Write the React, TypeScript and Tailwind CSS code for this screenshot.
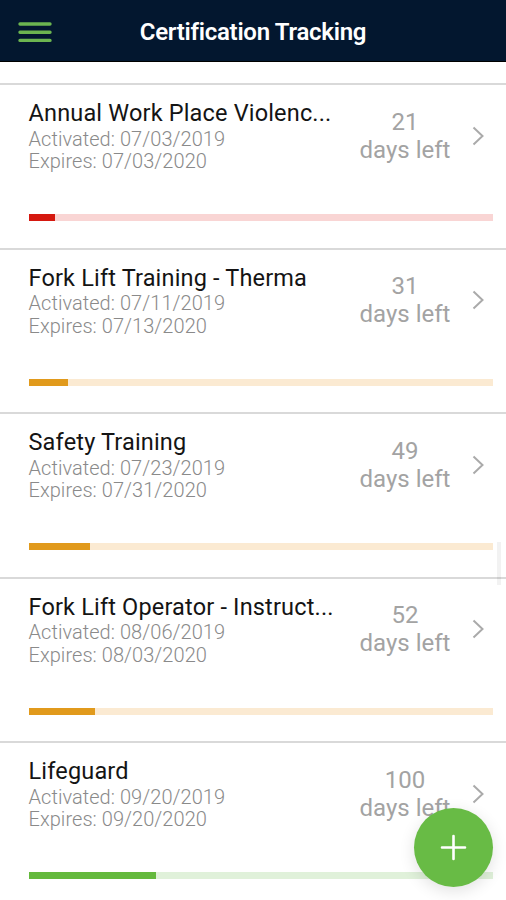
import React from 'react';
import clsx from 'clsx';

type Tone = 'red' | 'amber' | 'green';

interface Certification {
  title: string;
  activated: string;
  expires: string;
  daysLeft: number;
  progress: number;
  tone: Tone;
}

const certifications: Certification[] = [
  { title: 'Annual Work Place Violenc...', activated: '07/03/2019', expires: '07/03/2020', daysLeft: 21, progress: 5.75, tone: 'red' },
  { title: 'Fork Lift Training - Therma', activated: '07/11/2019', expires: '07/13/2020', daysLeft: 31, progress: 8.45, tone: 'amber' },
  { title: 'Safety Training', activated: '07/23/2019', expires: '07/31/2020', daysLeft: 49, progress: 13.2, tone: 'amber' },
  { title: 'Fork Lift Operator - Instruct...', activated: '08/06/2019', expires: '08/03/2020', daysLeft: 52, progress: 14.4, tone: 'amber' },
  { title: 'Lifeguard', activated: '09/20/2019', expires: '09/20/2020', daysLeft: 100, progress: 27.4, tone: 'green' },
];

const trackColors: Record<Tone, string> = {
  red: 'bg-[#f9d5d4]',
  amber: 'bg-[#fbead2]',
  green: 'bg-[#e0f1da]',
};

const fillColors: Record<Tone, string> = {
  red: 'bg-[#d5180f]',
  amber: 'bg-[#e19a1c]',
  green: 'bg-[#64b93c]',
};

function Header() {
  return (
    <header className="relative flex h-[62px] shrink-0 items-center justify-center border-b border-black bg-[#03172f]">
      <button className="absolute top-[21px] left-[18px]" aria-label="Menu">
        <svg width="34" height="22" viewBox="0 0 34 22" fill="none" stroke="#6cb550" strokeWidth="3.4" strokeLinecap="round">
          <path d="M2 3h30M2 11.2h30M2 19.4h30" />
        </svg>
      </button>
      <h1 className="pt-0.5 text-[24px] font-semibold tracking-[-0.28px] text-white">Certification Tracking</h1>
    </header>
  );
}

function CertificationRow({ cert }: { cert: Certification }) {
  return (
    <li className="h-[164.5px] border-t-2 border-[#d9d9d9] pr-[13px] pl-[28.5px]">
      <div className="flex h-[129px] justify-between pt-[13px]">
        <div className="min-w-0">
          <h2 className="text-[23.5px] leading-[30px] tracking-[0.17px] whitespace-nowrap text-[#141414]">{cert.title}</h2>
          <div className="-mt-[0.5px] text-[20px] leading-[22.5px] font-light tracking-[0.05px] text-[#8a8a8a]">
            <p>Activated: {cert.activated}</p>
            <p>Expires: {cert.expires}</p>
          </div>
        </div>
        <div className="flex items-start">
          <div className="w-[110px] pt-[9.5px] text-center text-[24px] leading-7 text-[#a3a3a3]">
            <p>{cert.daysLeft}</p>
            <p>days left</p>
          </div>
          <svg className="mt-[27.5px] mr-[8px] ml-[12px]" width="13" height="20" viewBox="0 0 13 20" fill="none" stroke="#aaaaaa" strokeWidth="2">
            <path d="M1.5 1.5l9 8.5l-9 8.5" />
          </svg>
        </div>
      </div>
      <div className={clsx('h-[7px]', trackColors[cert.tone])}>
        <div className={clsx('h-full', fillColors[cert.tone])} style={{ width: `${cert.progress}%` }} />
      </div>
    </li>
  );
}

export default function App() {
  return (
    <div className="relative flex h-[900px] w-[506px] flex-col overflow-hidden bg-white font-['Roboto',sans-serif]">
      <Header />
      <ul className="mt-[21px]">
        {certifications.map((cert) => (
          <CertificationRow key={cert.title} cert={cert} />
        ))}
      </ul>

      {/* Scroll thumb */}
      <div className="absolute top-[542px] right-[5px] h-[43px] w-1 bg-black/5" />

      <button
        aria-label="Add certification"
        className="absolute top-[808px] left-[414px] flex h-[79px] w-[79px] items-center justify-center rounded-full bg-[#68bb45] shadow-[0_4px_16px_rgba(0,0,0,0.12)]"
      >
        <svg width="27" height="27" viewBox="0 0 27 27" stroke="white" strokeWidth="2.6" strokeLinecap="round">
          <path d="M13.5 2v23M2 13.5h23" />
        </svg>
      </button>
    </div>
  );
}
